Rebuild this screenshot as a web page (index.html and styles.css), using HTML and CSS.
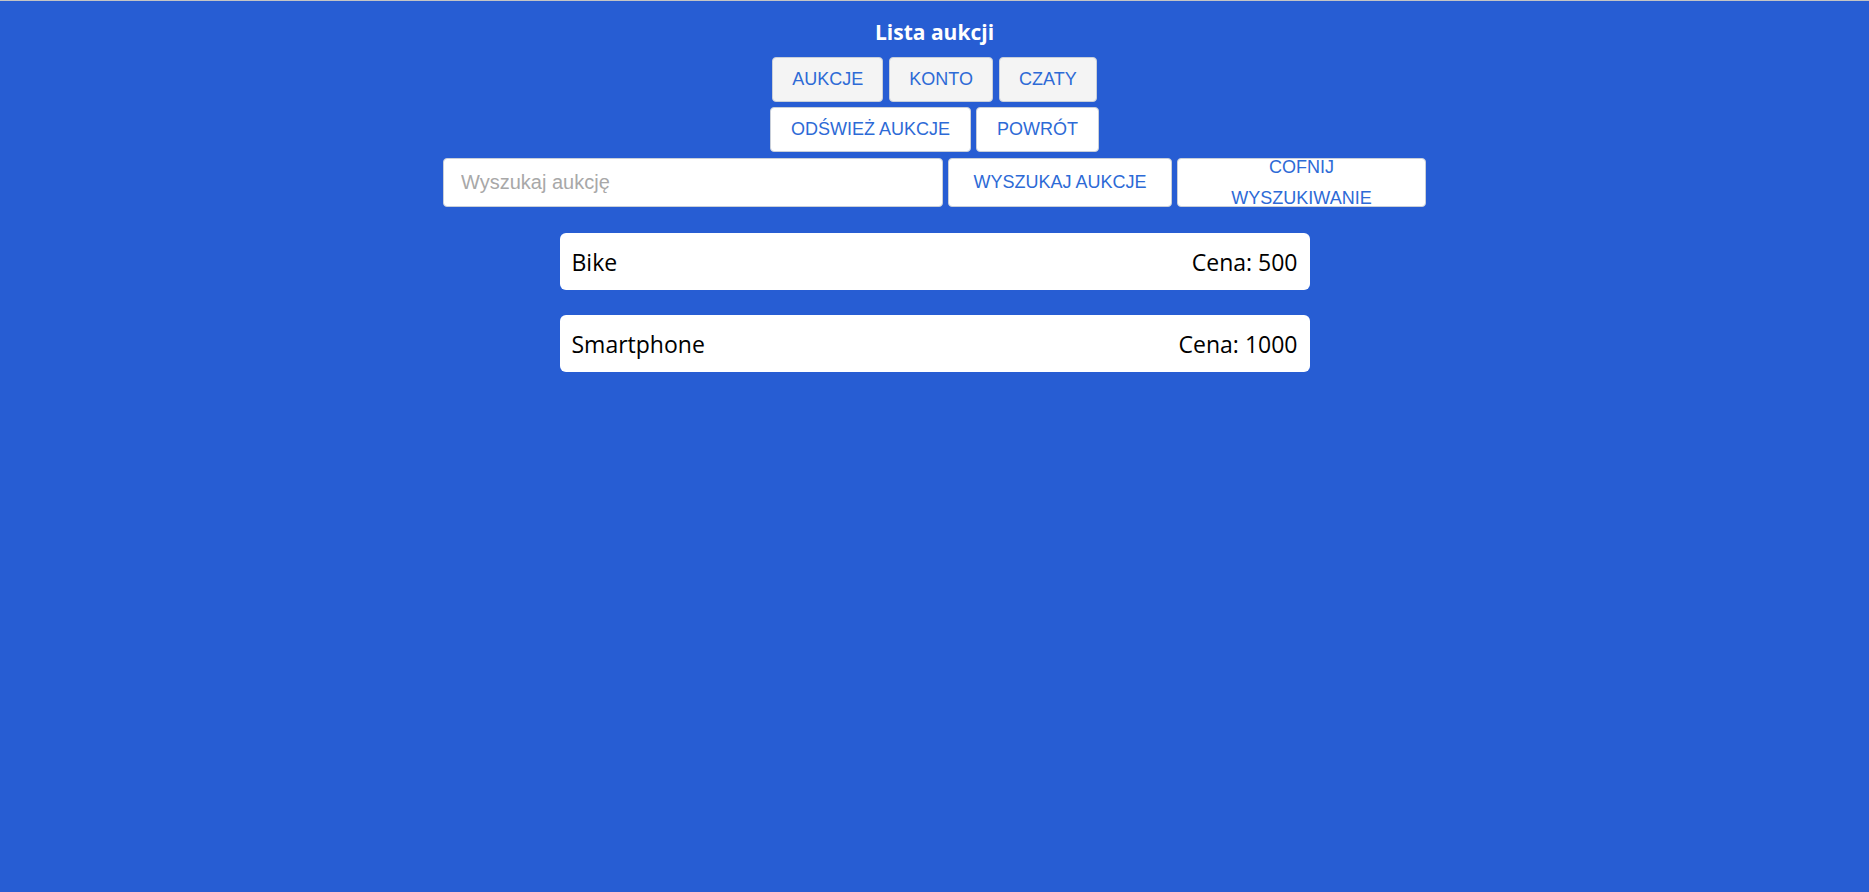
FILE: index.html
```html
<!DOCTYPE html>
<html lang="pl">
<head>
<meta charset="utf-8">
<title>Lista aukcji</title>
<link rel="stylesheet" href="styles.css">
</head>
<body>
<main class="page">
  <h1 class="title">Lista aukcji</h1>
  <nav class="btn-row row-nav">
    <button class="btn btn-gray">AUKCJE</button>
    <button class="btn btn-gray">KONTO</button>
    <button class="btn btn-gray">CZATY</button>
  </nav>
  <div class="btn-row row-actions">
    <button class="btn">ODŚWIEŻ AUKCJE</button>
    <button class="btn">POWRÓT</button>
  </div>
  <div class="search-row">
    <input class="search-input" type="text" placeholder="Wyszukaj aukcję">
    <button class="btn btn-search">WYSZUKAJ AUKCJE</button>
    <button class="btn btn-reset"><span class="btn-label">COFNIJ WYSZUKIWANIE</span></button>
  </div>
  <ul class="list">
    <li class="card"><span class="name">Bike</span><span class="price">Cena: 500</span></li>
    <li class="card"><span class="name">Smartphone</span><span class="price">Cena: 1000</span></li>
  </ul>
</main>
</body>
</html>
```
FILE: styles.css
```css
html, body {
  height: 100%;
}
body {
  margin: 0;
  background: #275dd3;
  border-top: 1px solid #c4c4c4;
  box-sizing: border-box;
  font-family: "Open Sans", "Noto Sans", sans-serif;
}
.page {
  display: flex;
  flex-direction: column;
  align-items: center;
}
.title {
  margin: 17px 0 0;
  font-size: 21px;
  line-height: 28px;
  font-weight: 700;
  color: #ffffff;
}
.btn-row {
  display: flex;
  gap: 5px;
}
.row-nav {
  margin-top: 11px;
  gap: 6px;
}
.row-actions {
  margin-top: 5px;
}
.btn {
  box-sizing: border-box;
  height: 45px;
  padding: 0 20px;
  border: 1px solid #c9cfd9;
  border-radius: 4px;
  background: #ffffff;
  color: #2d6ad6;
  font-family: "Liberation Sans", Arial, sans-serif;
  font-size: 18px;
  line-height: 31px;
  cursor: pointer;
}
.btn-gray {
  background: #f4f4f4;
  padding: 0 19px;
}
.search-row {
  margin-top: 6px;
  display: flex;
  gap: 5px;
  height: 49px;
}
.search-input {
  box-sizing: border-box;
  width: 500px;
  height: 49px;
  padding: 0 17px;
  border: 1px solid #c9cfd9;
  border-radius: 4px;
  background: #ffffff;
  font-family: "Liberation Sans", Arial, sans-serif;
  font-size: 20px;
  color: #333333;
  outline: none;
}
.search-input::placeholder {
  color: #a8a8a8;
}
.btn-search {
  width: 224px;
  height: 49px;
  padding: 0;
}
.btn-reset {
  width: 249px;
  height: 49px;
  padding: 0 30px;
  display: flex;
  align-items: center;
  justify-content: center;
  overflow: visible;
}
.btn-label {
  display: block;
  text-align: center;
}
.list {
  list-style: none;
  margin: 26px 0 0;
  padding: 0;
  display: flex;
  flex-direction: column;
  gap: 25px;
}
.card {
  box-sizing: border-box;
  width: 750px;
  height: 57px;
  padding: 1px 12px 0;
  display: flex;
  align-items: center;
  justify-content: space-between;
  background: #ffffff;
  border-radius: 6px;
  font-size: 23px;
  color: #000000;
}
```
